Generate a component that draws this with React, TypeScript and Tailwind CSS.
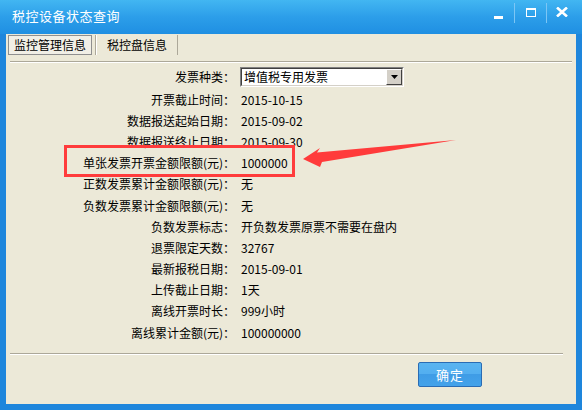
import React from "react";

const rows: [string, string][] = [
  ["开票截止时间", "2015-10-15"],
  ["数据报送起始日期", "2015-09-02"],
  ["数据报送终止日期", "2015-09-30"],
  ["单张发票开票金额限额(元)", "1000000"],
  ["正数发票累计金额限额(元)", "无"],
  ["负数发票累计金额限额(元)", "无"],
  ["负数发票标志", "开负数发票原票不需要在盘内"],
  ["退票限定天数", "32767"],
  ["最新报税日期", "2015-09-01"],
  ["上传截止日期", "1天"],
  ["离线开票时长", "999小时"],
  ["离线累计金额(元)", "100000000"],
];

const font = { fontFamily: '"Noto Sans CJK SC", "Liberation Sans", sans-serif' };

const Etched = ({ className = "" }: { className?: string }) => (
  <div className={`h-[2px] border-t border-[#aca899] border-b border-b-white ${className}`} />
);

const Label = ({ children }: { children: React.ReactNode }) => (
  <div className="w-[225px] shrink-0 flex justify-end items-center">
    <span>{children}</span>
    <span className="w-[12px] text-center">：</span>
  </div>
);

const TitleButtons = () => (
  <div className="flex items-stretch h-[20px] self-start mt-[3px]">
    <div className="w-[32px] flex items-center justify-center">
      <div className="w-[9px] h-[3px] bg-white mt-[8px]" />
    </div>
    <div className="w-px bg-[#7cc6f5]" />
    <div className="w-[31px] flex items-center justify-center">
      <div className="w-[10px] h-[9px] border border-white border-t-2 mt-[-2px]" />
    </div>
    <div className="w-px bg-[#7cc6f5]" />
    <div className="w-[30px] flex items-center justify-center">
      <svg width="12" height="10" viewBox="0 0 12 10" className="mt-[-2px]">
        <path d="M1 0.5 L11 9.5 M11 0.5 L1 9.5" stroke="white" strokeWidth="2.6" />
      </svg>
    </div>
  </div>
);

export default function App() {
  return (
    <div
      className="w-[582px] h-[410px] flex flex-col bg-[#1e86dc] text-[12px] text-black overflow-hidden"
      style={font}
    >
      {/* caption */}
      <div className="h-[34px] shrink-0 flex items-center justify-between bg-gradient-to-b from-[#42b6f2] via-[#2c9ee9] to-[#1f8fe2] pl-[12px] pr-[5px]">
        <span className="text-white text-[13px] mt-[-2px] tracking-[0.5px]">税控设备状态查询</span>
        <TitleButtons />
      </div>

      <div className="flex-1 mx-[6px] mb-[6px] bg-[#ece9d8] relative flex flex-col">
        {/* tabs */}
        <div className="flex items-end h-[21px] pt-[1px] pl-[2px]">
          <div className="h-[20px] w-[84px] border border-[#8f8f8f] bg-[#f1efe6] flex items-center justify-center">
            监控管理信息
          </div>
          <div className="h-[20px] w-[4px] border-r border-[#aca899]" />
          <div className="h-[20px] w-[82px] border-l border-white border-r border-r-[#aca899] flex items-center justify-center">
            税控盘信息
          </div>
        </div>

        <Etched className="mt-[6px] ml-[4px] mr-[4px]" />

        <div className="mt-[2px] ml-[4px] relative">
          {/* invoice type */}
          <div className="h-[24px] flex items-center">
            <Label>发票种类</Label>
            <div className="ml-[5px] w-[164px] h-[20px] border border-[#808080] border-r-white border-b-white">
              <div className="h-full flex items-center bg-white border border-[#404040] border-r-[#d4d0c8] border-b-[#d4d0c8]">
                <span className="flex-1 pl-[2px]">增值税专用发票</span>
                <div className="w-[16px] h-[16px] bg-[#d4d0c8] border border-white border-r-[#404040] border-b-[#404040] flex items-center justify-center">
                  <svg width="7" height="4" viewBox="0 0 7 4">
                    <path d="M0 0 H7 L3.5 4 Z" fill="black" />
                  </svg>
                </div>
              </div>
            </div>
          </div>

          {rows.map(([k, v]) => (
            <div key={k} className="h-[21.2px] flex items-center">
              <Label>{k}</Label>
              <span className="ml-[6px]">{v}</span>
            </div>
          ))}

          {/* highlight box and pointer */}
          <div className="absolute left-[54px] top-[80px] w-[231px] h-[32px] border-[3px] border-[#ff3c3c]" />
          <svg
            className="absolute left-[289px] top-[73px]"
            width="160"
            height="30"
            viewBox="289 73 160 30"
          >
            <polygon
              points="293,94 310,83 307,87.5 446,75 312,97 310,102"
              fill="#ff3b3b"
            />
          </svg>
        </div>

        <Etched className="mt-[10px] ml-[4px] mr-[13px]" />

        <div className="flex justify-end mt-[7px] mr-[94px]">
          <button className="w-[64px] h-[25px] rounded-[2px] border border-[#2a6cb4] bg-[linear-gradient(#5ab4f0_0%,#52aef0_50%,#3f9ce6_50%,#43a2ea_100%)] text-white text-[13px] tracking-[1px]">
            确定
          </button>
        </div>
      </div>
    </div>
  );
}
